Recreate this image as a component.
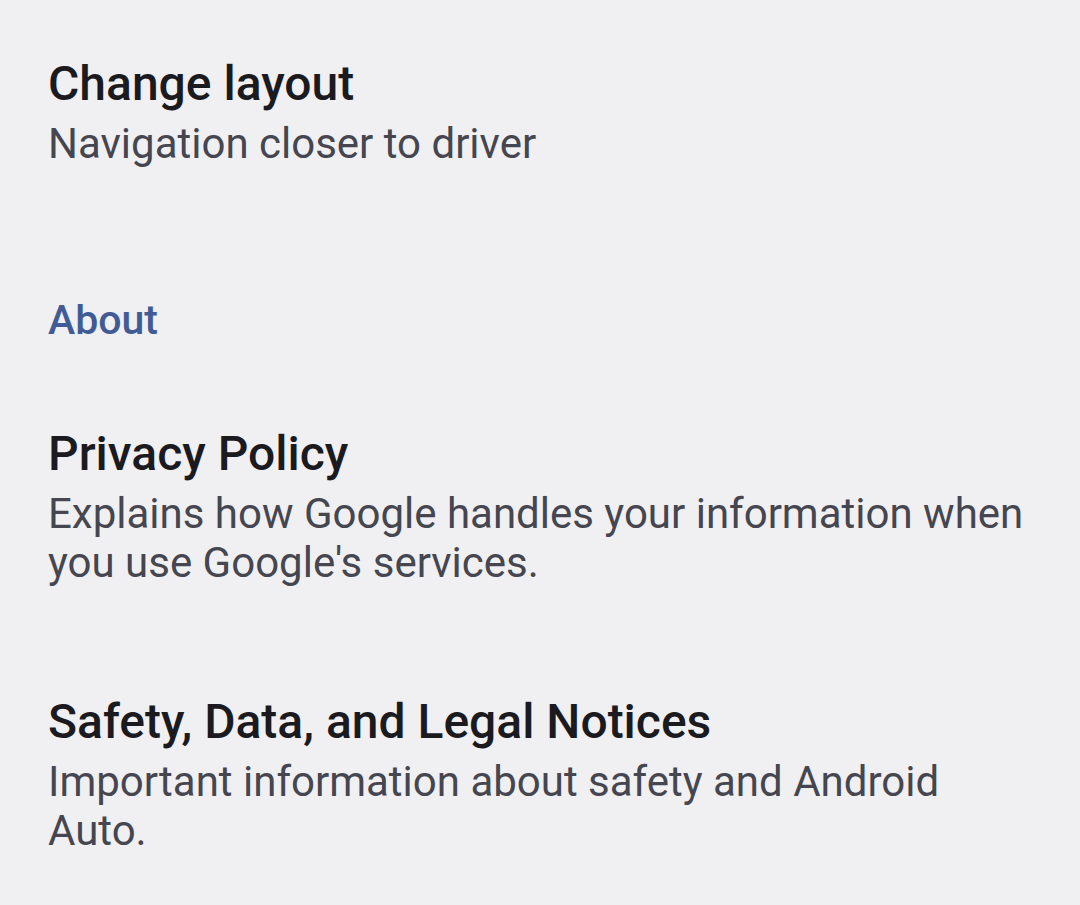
const ROBOTO = { fontFamily: "Roboto, 'Noto Sans', sans-serif" };

function Pref({ title, summary, className = "" }) {
  return (
    <div className={`pl-[48px] pr-[40px] ${className}`}>
      <div className="text-[48px] leading-[56px] font-medium text-[#1b1b1f]">
        {title}
      </div>
      <div className="mt-[7px] text-[42px] leading-[49px] text-[#45464f]">
        {summary}
      </div>
    </div>
  );
}

export default function App() {
  return (
    <div
      className="w-[1080px] h-[905px] overflow-hidden bg-[#f0f0f3]"
      style={ROBOTO}
    >
      <Pref
        className="pt-[56px]"
        title="Change layout"
        summary="Navigation closer to driver"
      />

      <div className="px-[48px] mt-[126px] text-[41px] leading-[52px] font-medium text-[#415b96]">
        About
      </div>

      <Pref
        className="mt-[80px]"
        title="Privacy Policy"
        summary="Explains how Google handles your information when you use Google's services."
      />

      <Pref
        className="mt-[107px]"
        title="Safety, Data, and Legal Notices"
        summary="Important information about safety and Android Auto."
      />
    </div>
  );
}
